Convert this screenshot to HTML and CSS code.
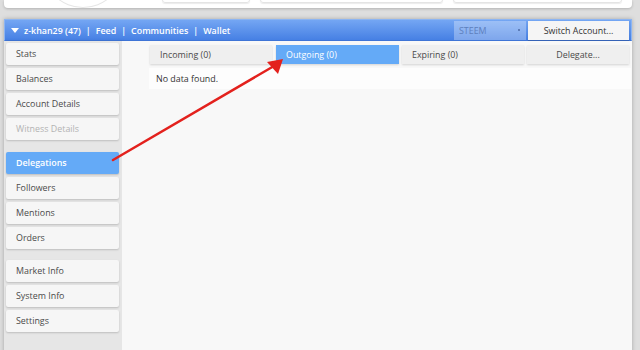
FILE: index.html
```
<!DOCTYPE html>
<html lang="en">
<head>
  <meta charset="UTF-8">
  <meta name="viewport" content="width=device-width, initial-scale=1.0">
  <title>Delegations</title>
  <link rel="stylesheet" href="styles.css">
</head>
<body>

<div class="top-card">
  <div class="top-circle"></div>
  <div class="top-box box-a"></div>
  <div class="top-box box-b"></div>
  <div class="top-box box-c"></div>
</div>

<div class="panel">
  <div class="header">
    <div class="nav">
      <span class="caret"></span>
      <span>z-khan29 (47)</span><span class="sep">|</span>
      <span>Feed</span><span class="sep">|</span>
      <span>Communities</span><span class="sep">|</span>
      <span>Wallet</span>
    </div>
    <div class="currency">STEEM <span class="dot"></span></div>
    <button type="button" class="switch">Switch Account...</button>
  </div>

  <div class="main">
    <div class="sidebar">
      <div class="menu-item">Stats</div>
      <div class="menu-item">Balances</div>
      <div class="menu-item">Account Details</div>
      <div class="menu-item disabled">Witness Details</div>
      <div class="menu-item active group">Delegations</div>
      <div class="menu-item">Followers</div>
      <div class="menu-item">Mentions</div>
      <div class="menu-item">Orders</div>
      <div class="menu-item group-small">Market Info</div>
      <div class="menu-item">System Info</div>
      <div class="menu-item">Settings</div>
    </div>

    <div class="content">
      <div class="tabs">
        <div class="tab">Incoming (0)</div>
        <div class="tab active">Outgoing (0)</div>
        <div class="tab">Expiring (0)</div>
        <div class="tab delegate">Delegate...</div>
      </div>
      <div class="empty">No data found.</div>
    </div>
  </div>
</div>

<!-- red arrow pointing at the Outgoing tab -->
<svg class="arrow" width="640" height="350" viewBox="0 0 640 350">
  <line x1="113" y1="160" x2="274" y2="66" stroke="#e3211d" stroke-width="2.5" stroke-linecap="round"/>
  <polygon points="283,59 267,62 278,74" fill="#e3211d"/>
</svg>

</body>
</html>
```

FILE: styles.css
```
body {
  margin: 0;
  background: #dedede;
  font-family: "Open Sans", "DejaVu Sans", sans-serif;
  font-size: 8.9px;
  width: 640px;
  height: 350px;
  overflow: hidden;
  position: relative;
}

.top-card {
  position: relative;
  margin: 0 8px 0 4px;
  height: 8px;
  background: #fff;
  border-radius: 0 0 4px 4px;
  box-shadow: 0 1px 3px rgba(0, 0, 0, 0.2);
  overflow: hidden;
}

.top-circle {
  position: absolute;
  left: 40px;
  top: -66px;
  width: 76px;
  height: 72px;
  border-radius: 50%;
  border: 1px solid #e6e6e6;
}

.top-box {
  position: absolute;
  top: -4px;
  height: 5px;
  border: 1px solid #e4e4e4;
  border-radius: 3px;
  box-shadow: 0 1px 1px rgba(0, 0, 0, 0.08);
}

.box-a { left: 158px; width: 86px; }
.box-b { left: 256px; width: 181px; }
.box-c { left: 449px; width: 167px; }

.panel {
  margin: 11px 8px 0 4px;
  height: 340px;
  background: #f8f8f8;
  box-shadow: 0 0 4px rgba(0, 0, 0, 0.25);
  display: flex;
  flex-direction: column;
}

.header {
  height: 22px;
  display: flex;
  align-items: center;
  background: linear-gradient(#74a6f3, #4680e4);
  border: 1px solid #8db5f2;
  border-bottom-color: #3e74d6;
  box-sizing: border-box;
  padding: 0 2px 0 6px;
}

.nav {
  flex: 1;
  color: #fff;
  font-weight: 600;
  display: flex;
  align-items: center;
}

.caret {
  width: 0;
  height: 0;
  border-left: 4px solid transparent;
  border-right: 4px solid transparent;
  border-top: 5px solid #fff;
  margin-right: 5px;
}

.sep {
  margin: 0 5px;
}

.currency {
  width: 72px;
  height: 19px;
  box-sizing: border-box;
  padding: 0 6px 0 5px;
  background: rgba(255, 255, 255, 0.3);
  color: #5d7fbd;
  display: flex;
  align-items: center;
  justify-content: space-between;
  margin-right: 2px;
}

.dot {
  width: 2px;
  height: 2px;
  background: #5c7cb8;
}

.switch {
  width: 101px;
  height: 19px;
  border: none;
  background: #f5f5f5;
  color: #333;
  font-family: inherit;
  font-size: inherit;
  padding: 0;
  box-shadow: 0 1px 1px rgba(0, 0, 0, 0.15);
}

.main {
  flex: 1;
  display: flex;
}

.sidebar {
  width: 118px;
  background: #e6e6e6;
  padding: 2px 0 0 2px;
  box-sizing: border-box;
  box-shadow: 2px 0 4px rgba(0, 0, 0, 0.06);
}

.menu-item {
  width: 113px;
  height: 22px;
  line-height: 22px;
  box-sizing: border-box;
  padding-left: 10px;
  margin-bottom: 3px;
  background: #f6f6f6;
  color: #4a4a4a;
  border-radius: 2px;
  box-shadow: 0 1px 2px rgba(0, 0, 0, 0.18);
}

.menu-item.group {
  margin-top: 12px;
}

.menu-item.group-small {
  margin-top: 11px;
}

.menu-item.disabled {
  color: #b3b3b3;
}

.menu-item.active {
  background: #64aaf7;
  color: #fff;
  font-weight: 600;
}

.content {
  flex: 1;
  padding: 4px 1px 0 27px;
  background: #f8f8f8;
}

.tabs {
  display: flex;
  gap: 3px;
  margin-left: 1px;
}

.tab {
  width: 122px;
  height: 19px;
  line-height: 20px;
  box-sizing: border-box;
  padding-left: 10px;
  background: #efefef;
  color: #4a4a4a;
  box-shadow: 0 1px 2px rgba(0, 0, 0, 0.15);
}

.tab.active {
  width: 123px;
  margin-left: 1px;
  background: #64aaf7;
  color: #fff;
}

.tab.delegate {
  width: 102px;
  padding-left: 0;
  text-align: center;
}

.empty {
  margin-top: 4px;
  height: 21px;
  line-height: 21px;
  padding-left: 7px;
  background: #fdfdfd;
  color: #333;
}

.arrow {
  position: absolute;
  left: 0;
  top: 0;
}
```
